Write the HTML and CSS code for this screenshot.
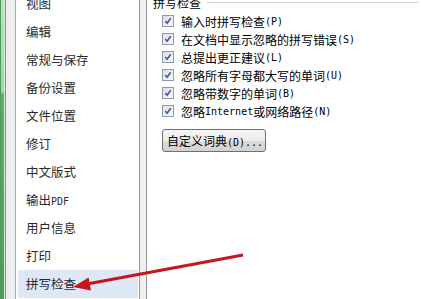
FILE: index.html
```html
<!DOCTYPE html>
<html lang="zh-CN">
<head>
    <meta charset="UTF-8">
    <meta name="viewport" content="width=device-width, initial-scale=1.0">
    <title>选项 - 拼写检查</title>
    <link rel="stylesheet" href="styles.css">
</head>
<body>
    <div class="window">
        <div class="edge"></div>
        <div class="rail"></div>
        <ul class="nav">
            <li>视图</li>
            <li>编辑</li>
            <li>常规与保存</li>
            <li>备份设置</li>
            <li>文件位置</li>
            <li>修订</li>
            <li>中文版式</li>
            <li>输出<span class="en">PDF</span></li>
            <li>用户信息</li>
            <li>打印</li>
            <li class="active">拼写检查</li>
        </ul>
        <div class="split"></div>
        <div class="main">
            <div class="group-title">
                <span>拼写检查</span>
                <span class="line"></span>
            </div>
            <label class="opt"><span class="box"><svg viewBox="0 0 11 11"><path d="M2.5 5.5 L4.5 8 L8.5 2.5" /></svg></span>输入时拼写检查<span class="en">(P)</span></label>
            <label class="opt"><span class="box"><svg viewBox="0 0 11 11"><path d="M2.5 5.5 L4.5 8 L8.5 2.5" /></svg></span>在文档中显示忽略的拼写错误<span class="en">(S)</span></label>
            <label class="opt"><span class="box"><svg viewBox="0 0 11 11"><path d="M2.5 5.5 L4.5 8 L8.5 2.5" /></svg></span>总提出更正建议<span class="en">(L)</span></label>
            <label class="opt"><span class="box"><svg viewBox="0 0 11 11"><path d="M2.5 5.5 L4.5 8 L8.5 2.5" /></svg></span>忽略所有字母都大写的单词<span class="en">(U)</span></label>
            <label class="opt"><span class="box"><svg viewBox="0 0 11 11"><path d="M2.5 5.5 L4.5 8 L8.5 2.5" /></svg></span>忽略带数字的单词<span class="en">(B)</span></label>
            <label class="opt"><span class="box"><svg viewBox="0 0 11 11"><path d="M2.5 5.5 L4.5 8 L8.5 2.5" /></svg></span>忽略<span class="en">Internet</span>或网络路径<span class="en">(N)</span></label>
            <button class="btn">自定义词典<span class="en">(D)...</span></button>
        </div>

        <!-- red annotation arrow drawn over the dialog -->
        <svg class="arrow" width="422" height="299" viewBox="0 0 422 299">
            <line x1="243" y1="255" x2="87" y2="284" />
            <polygon points="73,287 88.6,277.5 91,290.5" />
        </svg>
    </div>
</body>
</html>
```

FILE: styles.css
```css
body {
    margin: 0;
    background: #fff;
    font-family: "Noto Sans CJK SC", sans-serif;
    font-size: 12px;
}
.window {
    position: relative;
    display: flex;
    width: 422px;
    height: 299px;
    overflow: hidden;
}
.edge {
    width: 5px;
    background: linear-gradient(to bottom, #b9e0bf 0, #a6d6ae 92px, #5fae6c 94px, #4c9e5a 100%);
    box-shadow: inset 1px 0 0 #4f9a5c, inset -1px 0 0 #d6eed9;
}
.rail {
    width: 9px;
    background: #eeeeee;
    border-left: 1px solid #8c8c8c;
    border-right: 1px solid #a8a8a8;
}
.nav {
    list-style: none;
    margin: -10px 0 0;
    padding: 0 1px 0 2px;
    width: 120px;
    background: #fff;
}
.nav li {
    height: 28px;
    line-height: 28px;
    padding-left: 8px;
    color: #2a2a2a;
    font-size: 12.5px;
    white-space: nowrap;
}
.nav li.active {
    background: #dde7f6;
}
.en {
    font-family: "DejaVu Sans Mono", monospace;
    font-size: 10px;
}
.split {
    width: 6px;
    background: #efefef;
    border-left: 1px solid #9a9a9a;
    border-right: 1px solid #9a9a9a;
}
.main {
    flex: 1;
    padding-left: 6px;
    margin-top: -6px;
    color: #000;
}
.group-title {
    display: flex;
    align-items: center;
    height: 16px;
    gap: 6px;
    padding-right: 3px;
}
.group-title .line {
    flex: 1;
    border-top: 1px solid #cfd8de;
}
.opt {
    display: flex;
    align-items: center;
    height: 18px;
    padding-left: 9px;
    white-space: nowrap;
}
.opt:first-of-type {
    margin-top: 2px;
}
.box {
    display: inline-block;
    width: 10px;
    height: 10px;
    margin-right: 7px;
    border: 1px solid #8e9aa8;
    background: linear-gradient(135deg, #dcdfe4, #fbfbfb);
}
.box svg {
    display: block;
    width: 10px;
    height: 10px;
}
.box path {
    fill: none;
    stroke: #3d5a9a;
    stroke-width: 1.8;
}
.btn {
    display: block;
    margin: 9px 0 0 9px;
    width: 104px;
    height: 23px;
    padding: 0 0 0 4px;
    text-align: left;
    font-family: "Noto Sans CJK SC", sans-serif;
    font-size: 12px;
    color: #000;
    border: 1px solid #707070;
    border-radius: 3px;
    background: linear-gradient(to bottom, #f4f4f4 0, #ececec 50%, #dddddd 51%, #d2d2d2 100%);
}
.arrow {
    position: absolute;
    left: 0;
    top: 0;
    pointer-events: none;
}
.arrow line {
    stroke: #c4161d;
    stroke-width: 3;
}
.arrow polygon {
    fill: #c4161d;
}
```
